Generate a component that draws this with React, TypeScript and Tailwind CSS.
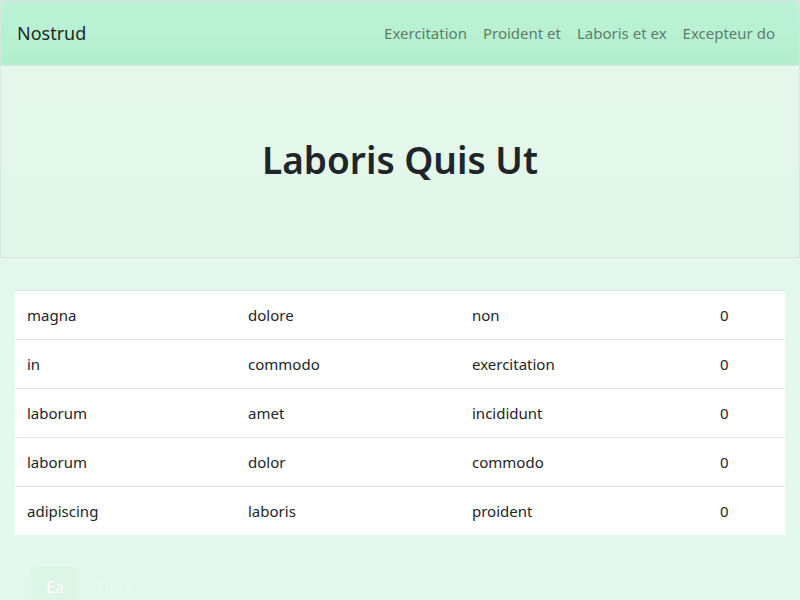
const rows = [
  ['magna', 'dolore', 'non', '0'],
  ['in', 'commodo', 'exercitation', '0'],
  ['laborum', 'amet', 'incididunt', '0'],
  ['laborum', 'dolor', 'commodo', '0'],
  ['adipiscing', 'laboris', 'proident', '0'],
]

const links = ['Exercitation', 'Proident et', 'Laboris et ex', 'Excepteur do']

export default function App() {
  return (
    <div
      className="min-h-[600px] bg-[#e3f8ed] text-[#212529]"
      style={{ fontFamily: '"Noto Sans", "Open Sans", sans-serif' }}
    >
      {/* Navbar */}
      <nav className="h-[66px] flex items-center justify-between border border-[#dee2e6] bg-gradient-to-b from-[#bcf2d6] to-[#b2efce] pl-4 pr-4">
        <span className="text-[18px] text-[#1c2a22]">Nostrud</span>
        <ul className="flex items-center">
          {links.map((l) => (
            <li key={l}>
              <a className="block px-2 text-[15px] text-[#627c6c]">{l}</a>
            </li>
          ))}
        </ul>
      </nav>

      {/* Hero */}
      <header className="h-[192px] flex items-center justify-center border border-t-0 border-[#dee2e6] bg-gradient-to-b from-[#e6f7ec] to-[#e0f7ea]">
        <h1 className="text-[37px] font-semibold text-[#212529] -mt-[3px]">Laboris Quis Ut</h1>
      </header>

      {/* Table */}
      <section className="px-[15px] pt-[32px]">
        <table className="w-full bg-white text-[15px] border-collapse table-fixed">
          <colgroup>
            <col className="w-[221px]" />
            <col className="w-[224px]" />
            <col className="w-[248px]" />
            <col className="w-[77px]" />
          </colgroup>
          <tbody>
            {rows.map((r, i) => (
              <tr key={i} className="border-t border-[#dee2e6]">
                {r.map((c, j) => (
                  <td key={j} className="px-3 py-3 leading-6 text-[#212529]">
                    {c}
                  </td>
                ))}
              </tr>
            ))}
          </tbody>
        </table>
      </section>

      {/* Pills */}
      <div className="flex px-[31px] pt-[32px] gap-[2px]">
        <button className="rounded-md bg-[#dcf5e6] px-[15px] py-2 text-[16px] text-white leading-6">Ea</button>
        <button className="rounded-md px-4 py-2 text-[16px] text-[#e9f8ef] leading-6">Quis</button>
      </div>
    </div>
  )
}
